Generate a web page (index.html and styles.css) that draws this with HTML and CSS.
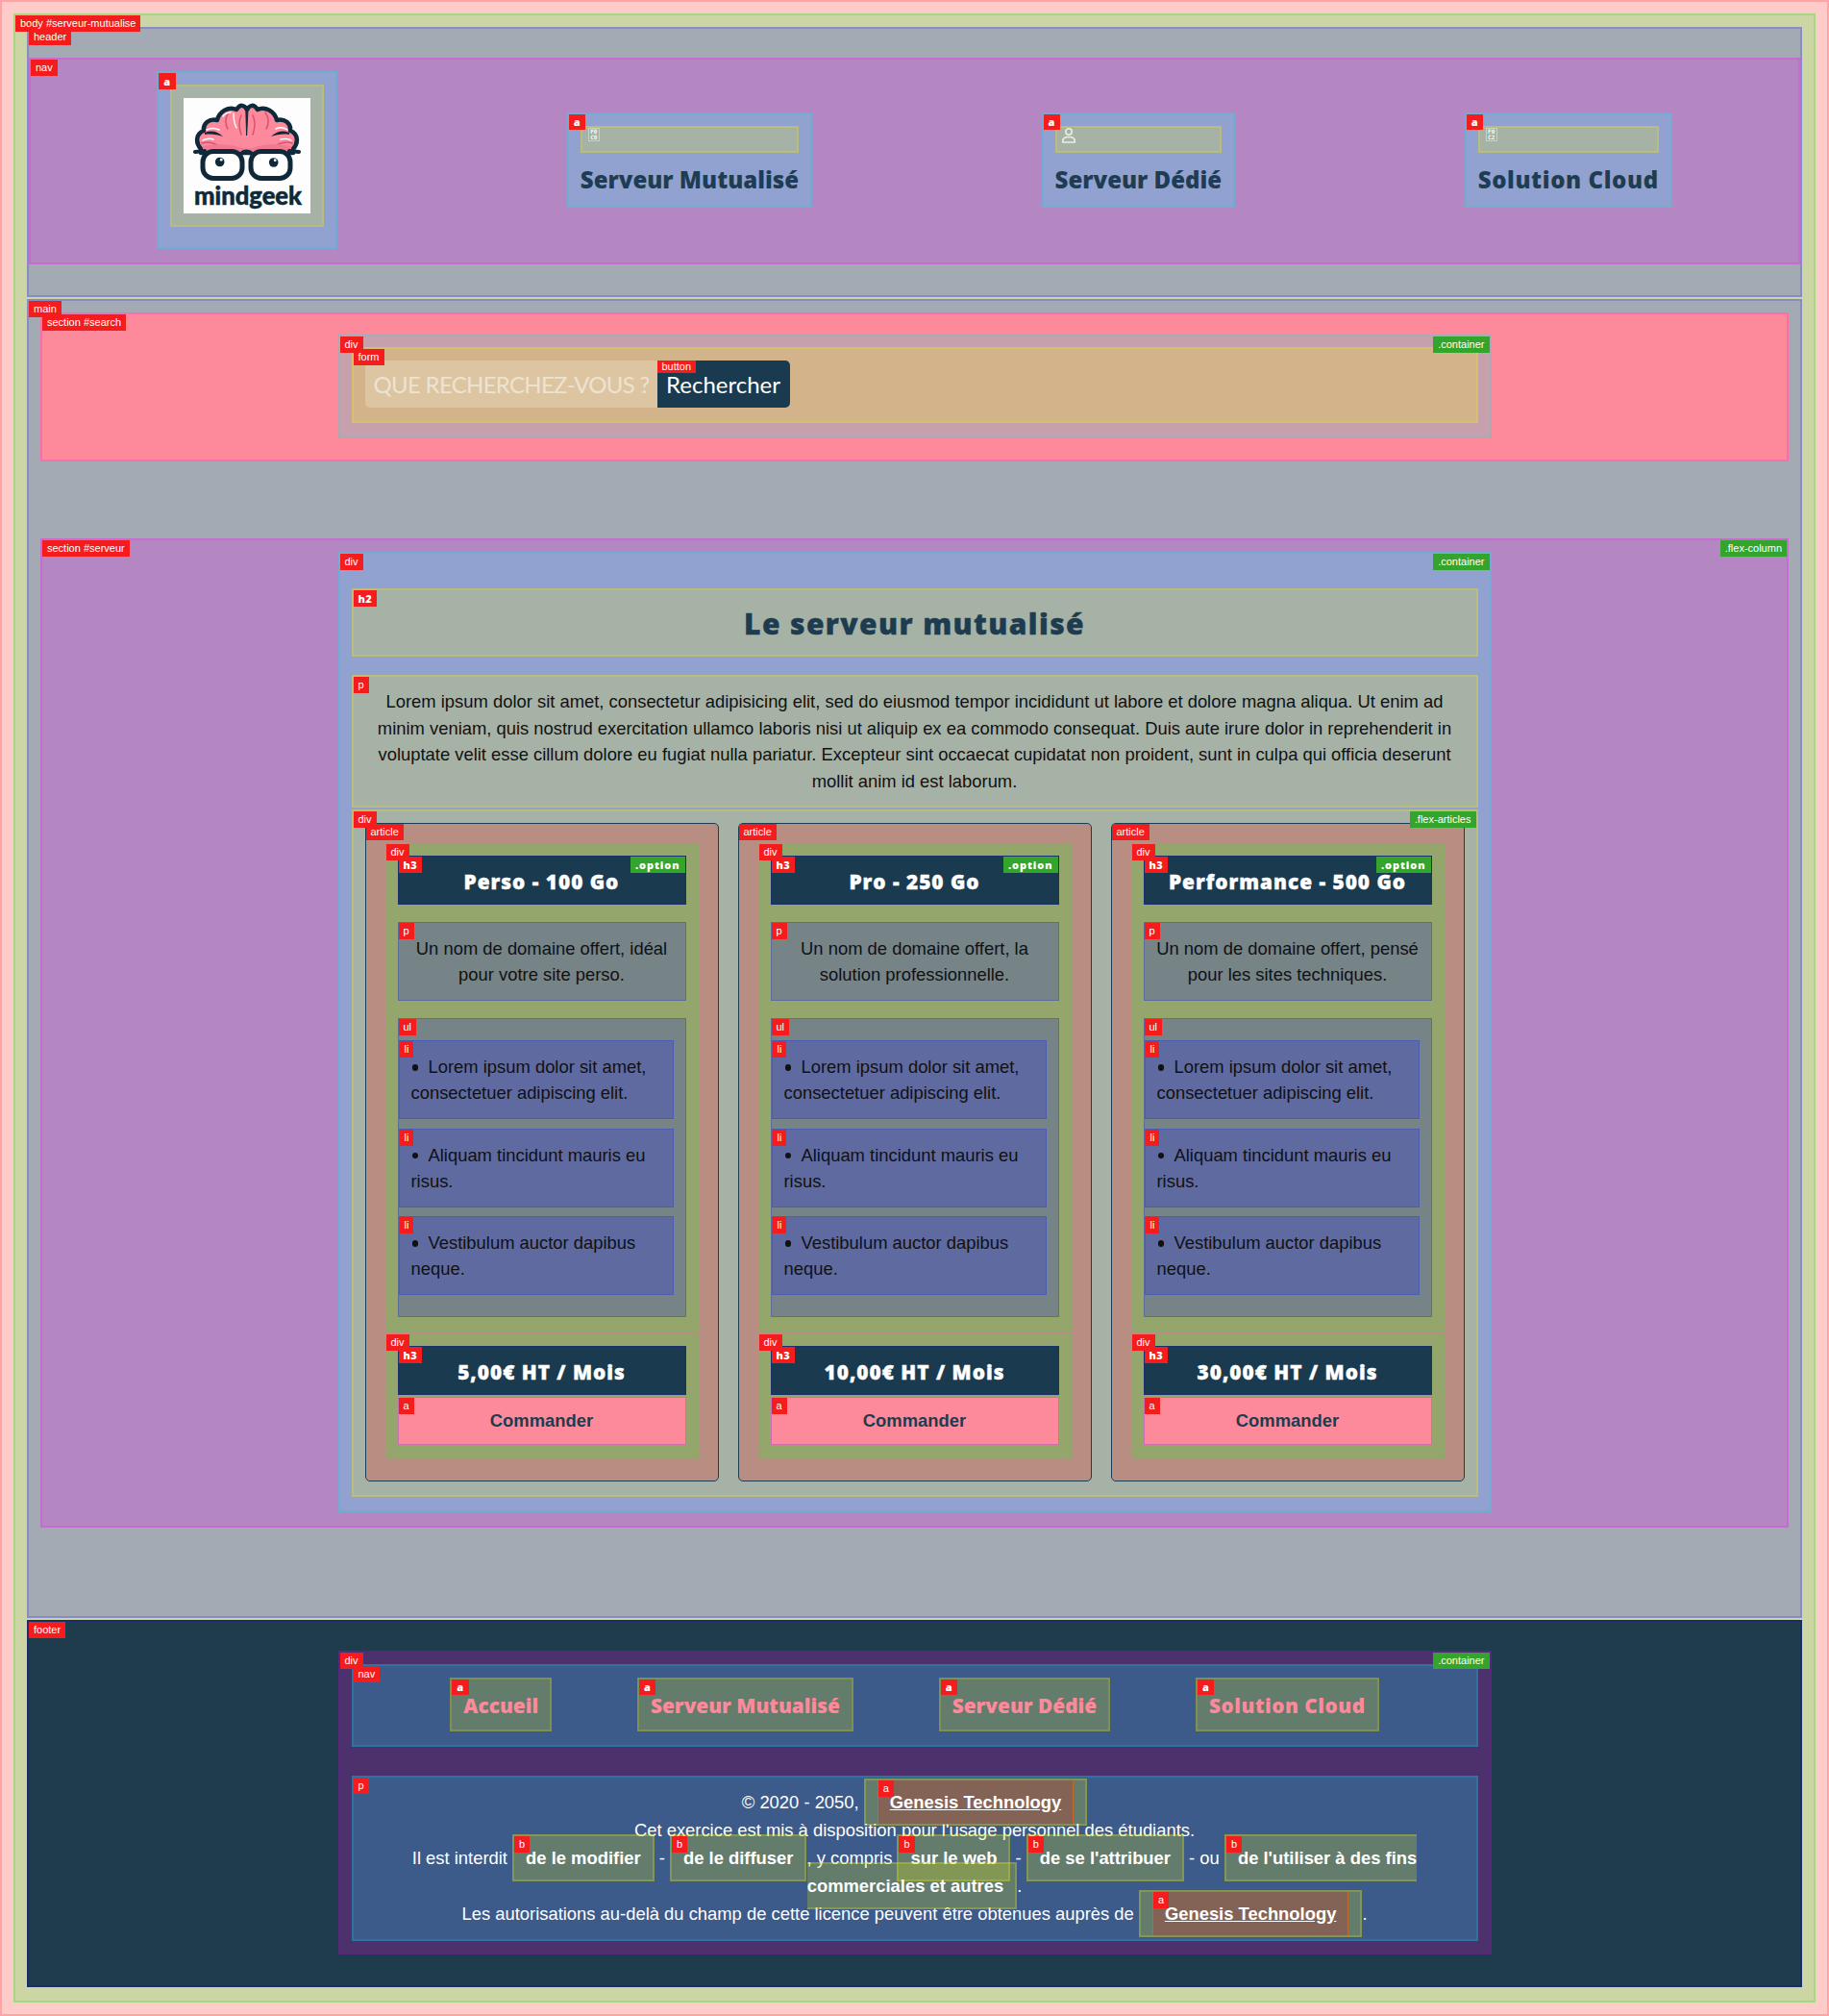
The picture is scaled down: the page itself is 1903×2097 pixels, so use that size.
FILE: index.html
```html
<!DOCTYPE html>
<html lang="fr">
<head>
<meta charset="utf-8">
<title>Serveur Mutualisé</title>
<link rel="stylesheet" href="styles.css">
</head>
<body>
<span class="tag">body #serveur-mutualise</span>
<header class="site-header">
  <span class="tag">header</span>
  <nav class="main-nav">
    <span class="tag">nav</span>
    <a class="logo-link" href="#">
      <span class="tag tag-head">a</span>
      <span class="logo-frame">
        <svg class="logo" viewBox="0 0 132 120" role="img" aria-label="mindgeek">
          <rect width="132" height="120" fill="#fdfdfd"/>
          <path d="M18 53C12 46 13 37 21 34C20 26 27 21 35 23C37 14 47 8 55 12C59 6 63 7 66 12C69 7 73 6 77 12C85 8 95 14 97 23C105 21 112 26 111 34C119 37 120 46 114 53L114 57L18 57Z" fill="#fc8a9c" stroke="#0e2a3a" stroke-width="4.5" stroke-linejoin="round"/>
          <path d="M64.8 12L65.6 39L67 12Z" fill="#0e2a3a" stroke="#0e2a3a" stroke-width="1"/>
          <path d="M22 36C29 33 36 35 41 40C35 38 29 37 22 38ZM110 36C103 33 96 35 91 40C97 38 103 37 110 38Z" fill="#0e2a3a"/>
          <path d="M47 15C43 20 43 27 46 32M85 15C89 20 89 27 86 32M60 18C57 24 58 32 60 38M72 18C75 24 74 32 72 38M19 47C25 45 30 46 35 49M113 47C107 45 102 46 97 49" stroke="#d9536f" stroke-width="1.5" fill="none" stroke-linecap="round"/>
          <path d="M24 33C29 31 33 31 37 33M96 32C100 30 105 31 108 33M20 44C24 42 28 42 31 43M101 43C105 42 109 42 112 44M41 19C43 16 46 15 49 15M52 16C52 22 53 27 55 31" stroke="#fff" stroke-width="1.4" fill="none" stroke-linecap="round"/>
          <path d="M20 50C36 47 50 48 58 51C62 53 70 53 74 51C82 48 98 47 112 50L112 56L20 56Z" fill="#ef7a92"/>
          <path d="M12 56L22 55M110 55L120 56" stroke="#0e2a3a" stroke-width="4" stroke-linecap="round"/>
          <rect x="20" y="55.5" width="41" height="28" rx="11" fill="#fff" stroke="#0e2a3a" stroke-width="5"/>
          <rect x="70" y="55.5" width="41" height="28" rx="11" fill="#fff" stroke="#0e2a3a" stroke-width="5"/>
          <path d="M60 58C63 55 68 55 71 58" stroke="#0e2a3a" stroke-width="4.5" fill="none"/>
          <circle cx="37.7" cy="66.5" r="4.8" fill="#0e2a3a"/>
          <circle cx="93.7" cy="67" r="4.8" fill="#0e2a3a"/>
          <circle cx="39.2" cy="64.2" r="1.4" fill="#fff"/>
          <circle cx="95.2" cy="64.7" r="1.4" fill="#fff"/>
          <text class="logo-word" x="11" y="111" textLength="112" lengthAdjust="spacingAndGlyphs">mindgeek</text>
        </svg>
      </span>
    </a>
    <a class="nav-link" href="#">
      <span class="tag tag-head">a</span>
      <span class="icon-box"><span class="tofu">F0<br>C0</span></span>
      <span class="nav-text">Serveur Mutualisé</span>
    </a>
    <a class="nav-link" href="#">
      <span class="tag tag-head">a</span>
      <span class="icon-box"><svg class="person" viewBox="0 0 14 16"><circle cx="7" cy="4" r="3.2" fill="none" stroke="#e8f0e8" stroke-width="1.6"/><path d="M0.8 15V13.5C0.8 10.8 3.5 9.5 7 9.5C10.5 9.5 13.2 10.8 13.2 13.5V15Z" fill="none" stroke="#e8f0e8" stroke-width="1.6"/></svg></span>
      <span class="nav-text">Serveur Dédié</span>
    </a>
    <a class="nav-link" href="#">
      <span class="tag tag-head">a</span>
      <span class="icon-box"><span class="tofu">F0<br>C2</span></span>
      <span class="nav-text wide">Solution Cloud</span>
    </a>
  </nav>
</header>

<main class="site-main">
  <span class="tag">main</span>
  <section class="search-section">
    <span class="tag">section #search</span>
    <div class="container search-container">
      <span class="tag">div</span>
      <span class="tag tag-green">.container</span>
      <form class="search-form">
        <span class="tag">form</span>
        <input class="search-input" type="text" placeholder="QUE RECHERCHEZ-VOUS ?">
        <button class="search-button" type="button"><span class="tag tag-button">button</span>Rechercher</button>
      </form>
    </div>
  </section>

  <section class="server-section">
    <span class="tag">section #serveur</span>
    <span class="tag tag-green">.flex-column</span>
    <div class="container server-container">
      <span class="tag">div</span>
      <span class="tag tag-green">.container</span>
      <h2 class="server-title"><span class="tag tag-head">h2</span>Le serveur mutualisé</h2>
      <p class="server-intro"><span class="tag">p</span>Lorem ipsum dolor sit amet, consectetur adipisicing elit, sed do eiusmod tempor incididunt ut labore et dolore magna aliqua. Ut enim ad minim veniam, quis nostrud exercitation ullamco laboris nisi ut aliquip ex ea commodo consequat. Duis aute irure dolor in reprehenderit in voluptate velit esse cillum dolore eu fugiat nulla pariatur. Excepteur sint occaecat cupidatat non proident, sunt in culpa qui officia deserunt mollit anim id est laborum.</p>
      <div class="flex-articles">
        <span class="tag">div</span>
        <span class="tag tag-green">.flex-articles</span>

        <article class="offer">
          <span class="tag">article</span>
          <div class="offer-top">
            <span class="tag">div</span>
            <h3 class="offer-title"><span class="tag tag-head">h3</span><span class="tag tag-green tag-head">.option</span>Perso - 100 Go</h3>
            <p class="offer-desc"><span class="tag">p</span>Un nom de domaine offert, idéal pour votre site perso.</p>
            <ul class="offer-list">
              <span class="tag">ul</span>
              <li class="offer-item"><span class="tag">li</span>Lorem ipsum dolor sit amet, consectetuer adipiscing elit.</li>
              <li class="offer-item"><span class="tag">li</span>Aliquam tincidunt mauris eu risus.</li>
              <li class="offer-item"><span class="tag">li</span>Vestibulum auctor dapibus neque.</li>
            </ul>
          </div>
          <div class="offer-bottom">
            <span class="tag">div</span>
            <h3 class="offer-title"><span class="tag tag-head">h3</span>5,00€ HT / Mois</h3>
            <a class="order" href="#"><span class="tag">a</span>Commander</a>
          </div>
        </article>

        <article class="offer">
          <span class="tag">article</span>
          <div class="offer-top">
            <span class="tag">div</span>
            <h3 class="offer-title"><span class="tag tag-head">h3</span><span class="tag tag-green tag-head">.option</span>Pro - 250 Go</h3>
            <p class="offer-desc"><span class="tag">p</span>Un nom de domaine offert, la solution professionnelle.</p>
            <ul class="offer-list">
              <span class="tag">ul</span>
              <li class="offer-item"><span class="tag">li</span>Lorem ipsum dolor sit amet, consectetuer adipiscing elit.</li>
              <li class="offer-item"><span class="tag">li</span>Aliquam tincidunt mauris eu risus.</li>
              <li class="offer-item"><span class="tag">li</span>Vestibulum auctor dapibus neque.</li>
            </ul>
          </div>
          <div class="offer-bottom">
            <span class="tag">div</span>
            <h3 class="offer-title"><span class="tag tag-head">h3</span>10,00€ HT / Mois</h3>
            <a class="order" href="#"><span class="tag">a</span>Commander</a>
          </div>
        </article>

        <article class="offer">
          <span class="tag">article</span>
          <div class="offer-top">
            <span class="tag">div</span>
            <h3 class="offer-title"><span class="tag tag-head">h3</span><span class="tag tag-green tag-head">.option</span>Performance - 500 Go</h3>
            <p class="offer-desc"><span class="tag">p</span>Un nom de domaine offert, pensé pour les sites techniques.</p>
            <ul class="offer-list">
              <span class="tag">ul</span>
              <li class="offer-item"><span class="tag">li</span>Lorem ipsum dolor sit amet, consectetuer adipiscing elit.</li>
              <li class="offer-item"><span class="tag">li</span>Aliquam tincidunt mauris eu risus.</li>
              <li class="offer-item"><span class="tag">li</span>Vestibulum auctor dapibus neque.</li>
            </ul>
          </div>
          <div class="offer-bottom">
            <span class="tag">div</span>
            <h3 class="offer-title"><span class="tag tag-head">h3</span>30,00€ HT / Mois</h3>
            <a class="order" href="#"><span class="tag">a</span>Commander</a>
          </div>
        </article>
      </div>
    </div>
  </section>
</main>

<footer class="site-footer">
  <span class="tag">footer</span>
  <div class="container footer-container">
    <span class="tag">div</span>
    <span class="tag tag-green">.container</span>
    <nav class="footer-nav">
      <span class="tag">nav</span>
      <a class="footer-link" href="#"><span class="tag tag-head">a</span>Accueil</a>
      <a class="footer-link" href="#"><span class="tag tag-head">a</span>Serveur Mutualisé</a>
      <a class="footer-link" href="#"><span class="tag tag-head">a</span>Serveur Dédié</a>
      <a class="footer-link wide" href="#"><span class="tag tag-head">a</span>Solution Cloud</a>
    </nav>
    <p class="legal"><span class="tag">p</span>© 2020 - 2050, <span class="mark"><a class="credit" href="#"><span class="tag">a</span>Genesis Technology</a></span><br>Cet exercice est mis à disposition pour l'usage personnel des étudiants.<br>Il est interdit <b class="mark"><span class="tag">b</span>de le modifier</b> - <b class="mark"><span class="tag">b</span>de le diffuser</b>, y compris <b class="mark"><span class="tag">b</span>sur le web</b> - <b class="mark"><span class="tag">b</span>de se l'attribuer</b> - ou <b class="mark"><span class="tag">b</span>de l'utiliser à des fins commerciales et autres</b>.<br>Les autorisations au-delà du champ de cette licence peuvent être obtenues auprès de <span class="mark"><a class="credit" href="#"><span class="tag">a</span>Genesis Technology</a></span>.</p>
  </div>
</footer>
</body>
</html>
```
FILE: styles.css
```css
* { box-sizing: border-box; }
html {
  border: 2px solid #ffa3a3;
  padding: 12px;
  background: #ffcbc9;
  font-family: "Liberation Sans", Arial, sans-serif;
  font-size: 18.4px;
  line-height: 27px;
  color: #111;
}
body {
  position: relative;
  margin: 0;
  border: 2px solid #a6d884;
  padding: 12px;
  background: #ccd6a4;
  min-height: 2069px;
}
a { text-decoration: none; }

.tag {
  position: absolute;
  top: 0;
  left: 0;
  z-index: 3;
  padding: 0 5px;
  background: #f41c1c;
  color: #fff;
  font-size: 11px;
  font-weight: 400;
  line-height: 17px;
  letter-spacing: 0;
  text-decoration: none;
  white-space: nowrap;
  -webkit-text-stroke: 0;
}
.tag-green { left: auto; right: 0; background: #33a52c; }
.tag-head { font-family: "Open Sans", sans-serif; font-weight: 800; letter-spacing: 0.5px; }
.tag-green.tag-head { letter-spacing: 0.9px; }
.tag-button { line-height: 13px; font-family: "Liberation Sans", sans-serif; }

/* header */
.site-header {
  position: relative;
  border: 2px solid #868dc4;
  padding: 30px 0 32px;
  background: #a3aab4;
  margin-bottom: 2px;
}
.main-nav {
  position: relative;
  display: flex;
  justify-content: space-around;
  align-items: center;
  border: 2px solid #c46ccf;
  padding: 12px 12px 14px;
  background: #b486c2;
}
.logo-link {
  position: relative;
  display: block;
  border: 2px solid #72acd4;
  padding: 12px 12px 21px;
  background: #92a2d0;
}
.logo-frame {
  display: block;
  border: 2px solid #b8bd7c;
  padding: 12px;
  background: #a7b2a6;
}
.logo { display: block; width: 132px; height: 120px; }
.logo-word { font-family: "Lato", sans-serif; font-weight: 900; font-size: 26px; fill: #0e2a3a; stroke: #0e2a3a; stroke-width: 0.5px; }

.nav-link {
  position: relative;
  display: block;
  border: 2px solid #72acd4;
  padding: 12px;
  background: #92a2d0;
}
.nav-link .tag-head { line-height: 16px; }
.icon-box {
  display: flex;
  align-items: flex-start;
  height: 28px;
  border: 2px solid #b8bd7c;
  padding: 0 6px;
  background: #a7b2a6;
}
.tofu {
  display: block;
  width: 12px;
  height: 14px;
  border: 1px solid #c5d2c6;
  color: #f6f9f4;
  font-family: "DejaVu Sans Mono", monospace;
  font-size: 6px;
  font-weight: 700;
  line-height: 6px;
  text-align: center;
}
.person { display: block; width: 14px; height: 16px; margin-left: -1px; }
.nav-text {
  display: block;
  margin-top: 13px;
  color: #1f3d52;
  font-family: "Open Sans", sans-serif;
  font-weight: 800;
  font-size: 24px;
  line-height: 30px;
  white-space: nowrap;
}
.wide { letter-spacing: 0.5px; }
.nav-text.wide { letter-spacing: 0.6px; }

/* main */
.site-main {
  position: relative;
  border: 2px solid #868dc4;
  padding: 12px;
  background: #a3aab4;
  margin-bottom: 2px;
}
.container {
  position: relative;
  width: 1200px;
  margin: 0 auto;
  border: 2px solid;
}
.search-section {
  position: relative;
  border: 2px solid #fb6fa8;
  padding: 21px 0 22px;
  margin-bottom: 80px;
  background: #fd8a9a;
}
.search-container {
  border-color: #a6abb4;
  padding: 11px 12px 14px;
  background: #c6a0ac;
}
.search-form {
  position: relative;
  display: flex;
  border: 2px solid #d5c06c;
  padding: 12px 12px 14px;
  background: #d3b38a;
}
.search-input {
  width: 304px;
  height: 49px;
  border: 0;
  border-radius: 5px 0 0 5px;
  padding: 0 9px;
  background: #dec5a2;
  font-family: "Lato", sans-serif;
  font-size: 24px;
  letter-spacing: -0.7px;
  color: #ece3d0;
  outline: 0;
}
.search-input::placeholder { color: #ece3d0; opacity: 1; }
.search-button {
  position: relative;
  width: 138px;
  height: 49px;
  border: 0;
  border-radius: 0 5px 5px 0;
  padding: 0;
  background: #1a3b4f;
  color: #fff;
  font-family: "Lato", sans-serif;
  font-size: 24px;
}

.server-section {
  position: relative;
  border: 2px solid #c46ccf;
  padding: 12px 0 14px;
  margin-bottom: 80px;
  background: #b486c2;
}
.server-container {
  border-color: #72acd4;
  padding: 36px 12px 14px;
  background: #92a2d0;
}
.server-title {
  position: relative;
  margin: 0 0 19px;
  border: 2px solid #b8bd7c;
  padding: 13px 12px 11px;
  background: #a7b2a6;
  color: #1d3c50;
  font-family: "Open Sans", sans-serif;
  font-weight: 800;
  font-size: 30px;
  line-height: 43px;
  letter-spacing: 1.4px;
  -webkit-text-stroke: 0.4px #1d3c50;
  text-align: center;
}
.server-intro {
  position: relative;
  margin: 0 0 2px;
  border: 2px solid #b8bd7c;
  padding: 12px;
  background: #a7b2a6;
  text-align: center;
  line-height: 27.6px;
}
.flex-articles {
  position: relative;
  display: flex;
  gap: 20px;
  border: 2px solid #b8bd7c;
  padding: 12px 12px 14px;
  background: #a7b2a6;
}
.offer {
  position: relative;
  flex: 1 1 0;
  border: 1px solid #1c3c50;
  border-radius: 5px;
  padding: 20px 20px 22px;
  background: #b88e82;
}
.offer-top, .offer-bottom {
  position: relative;
  border: 1px solid #8ea86c;
  padding: 12px 12px 14px;
  background: #94a66c;
}
.offer-bottom { margin-top: 2px; }
.offer-title {
  position: relative;
  margin: 0 0 18px;
  border: 1px solid #1a2f6c;
  padding: 13px 0 9px;
  background: #1a3b4f;
  color: #fff;
  font-family: "Open Sans", sans-serif;
  font-weight: 800;
  font-size: 20.8px;
  line-height: 27px;
  letter-spacing: 1px;
  -webkit-text-stroke: 0.4px #fff;
  text-align: center;
}
.offer-bottom .offer-title { margin-bottom: 2px; }
.offer-desc {
  position: relative;
  margin: 0 0 18px;
  border: 1px solid #5c6c9c;
  padding: 13px 8px;
  background: #768387;
  text-align: center;
}
.offer-list {
  position: relative;
  margin: 0;
  border: 1px solid #5c6c9c;
  padding: 22px 12px 22px 0;
  background: #768387;
  list-style: none;
}
.offer-item {
  position: relative;
  border: 1px solid #4c5cb0;
  padding: 13px 12px;
  background: #5e6aa0;
}
.offer-item::before {
  content: "";
  display: inline-block;
  width: 6.5px;
  height: 6.5px;
  margin: 0 10.5px 0 1px;
  border-radius: 50%;
  background: #111;
  vertical-align: 2.5px;
}
.offer-item + .offer-item { margin-top: 9.5px; }
.order {
  position: relative;
  display: block;
  border: 1px solid #d06cb0;
  padding: 10px 0 11px;
  background: #fd8a9a;
  color: #1f3b50;
  font-weight: 700;
  text-align: center;
}

/* footer */
.site-footer {
  position: relative;
  border: 2px solid #1a2d6c;
  padding: 30px 0 32px;
  background: #1e3c4c;
  margin-bottom: 2px;
  color: #fff;
}
.footer-container {
  border-color: #55287a;
  padding: 12px;
  background: #4c316c;
}
.footer-nav {
  position: relative;
  display: flex;
  justify-content: space-evenly;
  border: 2px solid #2f73a0;
  padding: 12px 12px 14px;
  margin-bottom: 30px;
  background: #3c5a8a;
}
.footer-link {
  position: relative;
  display: block;
  border: 2px solid #7f9050;
  padding: 13px 12px 11px;
  background: #647c6c;
  color: #fd8a9a;
  font-family: "Open Sans", sans-serif;
  font-weight: 800;
  font-size: 20.8px;
  line-height: 28px;
}
.footer-link .tag-head { line-height: 16px; }
.legal {
  position: relative;
  margin: 0;
  border: 2px solid #2f73a0;
  padding: 12px;
  background: #3c5a8a;
  text-align: center;
  line-height: 28.8px;
}
.mark {
  border: 2px solid rgba(220, 226, 18, 0.25);
  padding: 12px;
  background: rgba(220, 226, 18, 0.25);
  font-weight: 700;
}
b.mark { position: relative; }
.credit {
  position: relative;
  border: 1px solid rgba(255, 110, 0, 0.5);
  padding: 12px;
  background: rgba(255, 0, 0, 0.2);
  color: #fff;
  font-weight: 700;
  text-decoration: underline;
}
```
